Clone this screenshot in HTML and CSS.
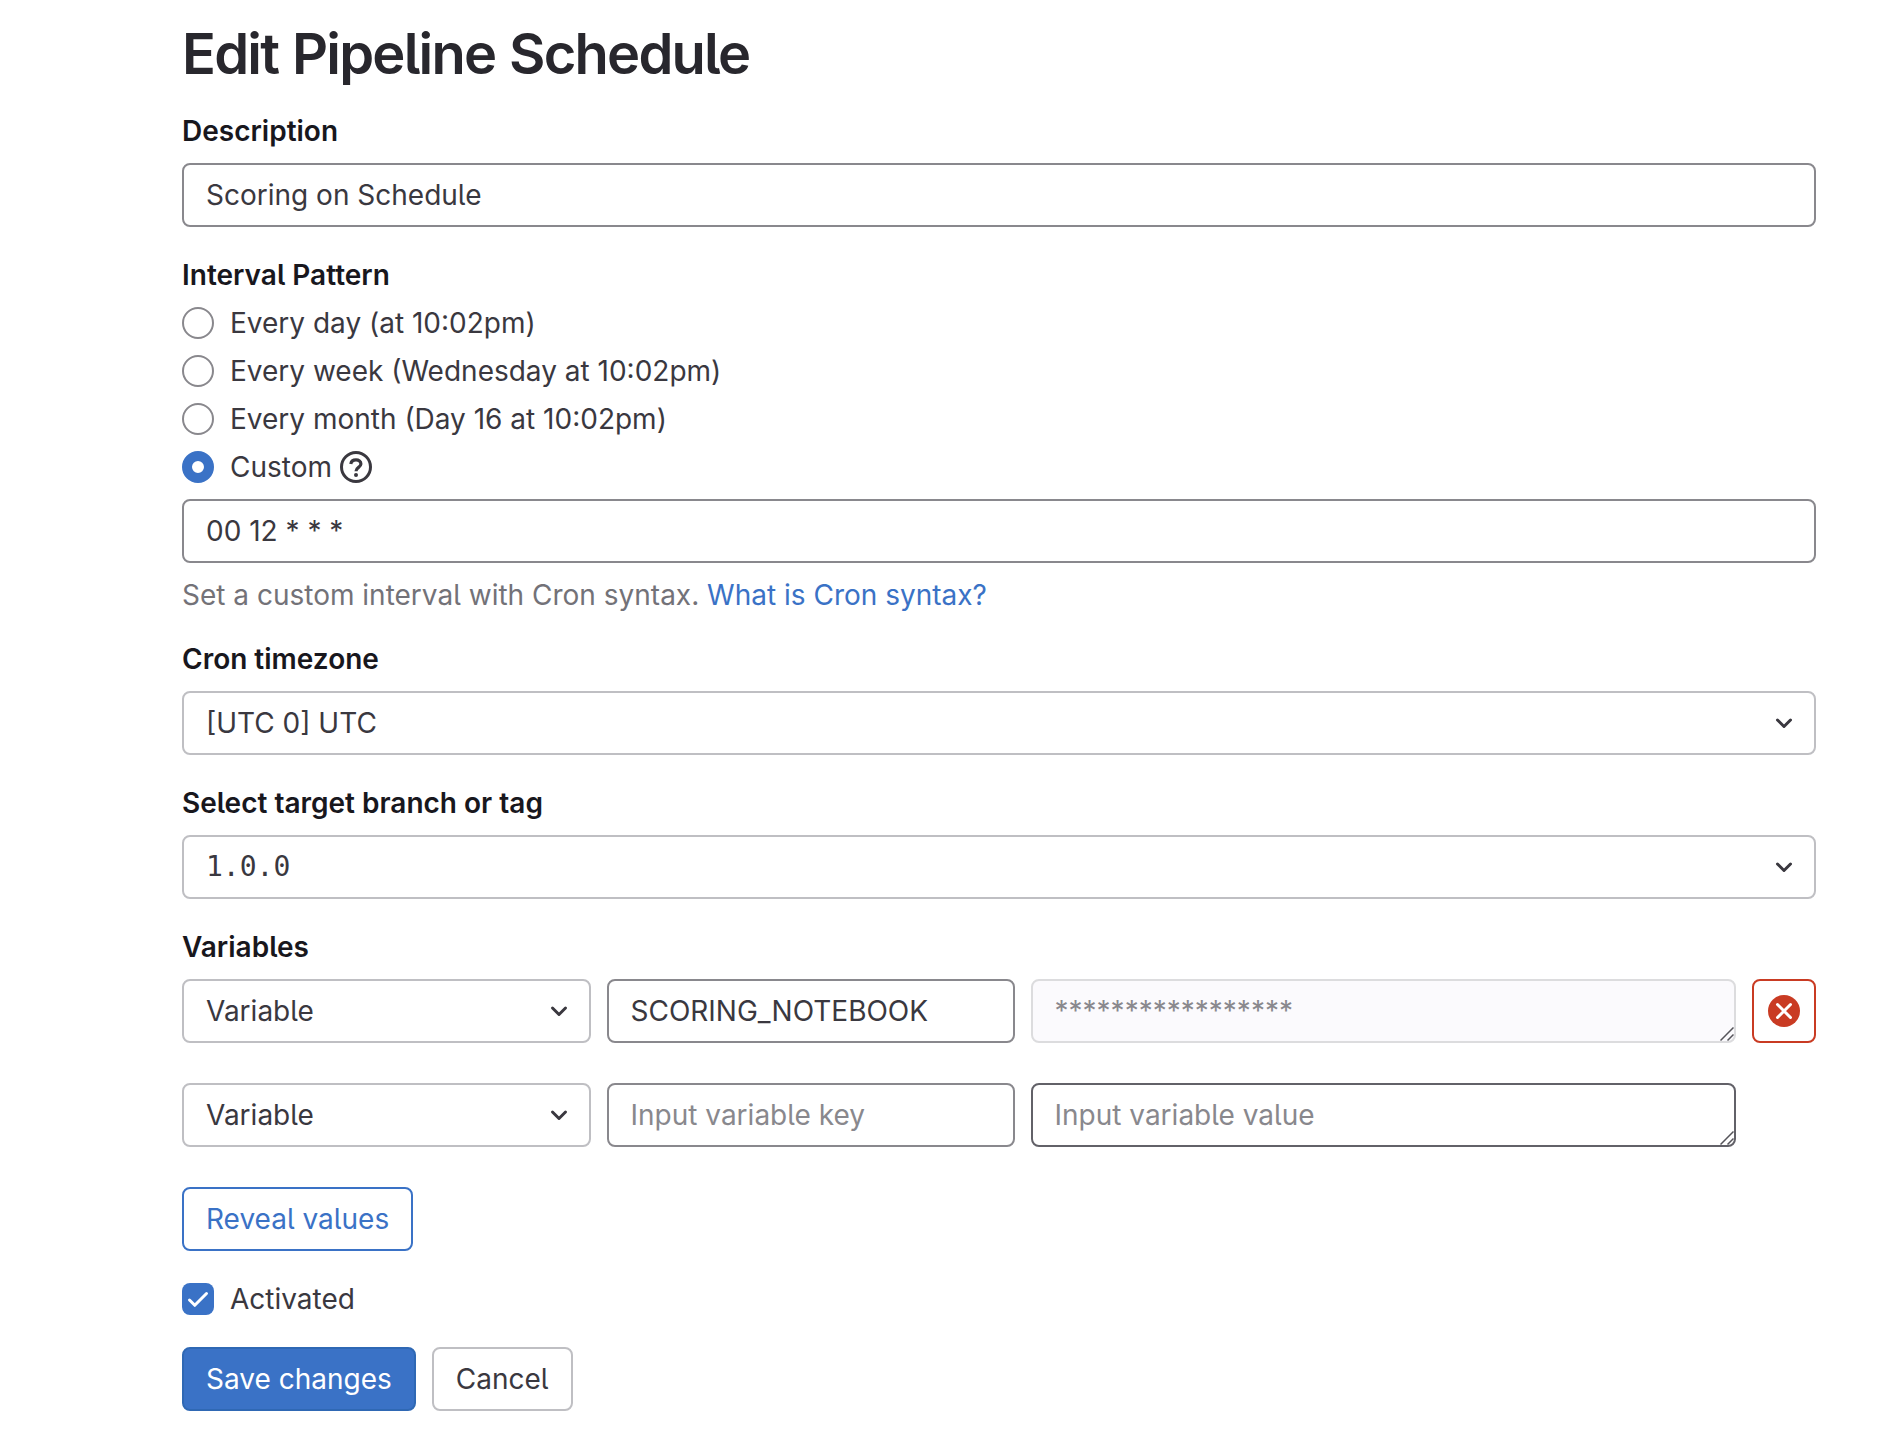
FILE: index.html
```html
<!DOCTYPE html>
<html lang="en">
<head>
<meta charset="utf-8">
<title>Edit Pipeline Schedule</title>
<link rel="stylesheet" href="styles.css">
</head>
<body>
<main class="page">
  <h1 class="title"><span>Edit Pipeline Schedule</span></h1>
  <form class="form">
    <section class="group">
      <div class="label"><span>Description</span></div>
      <div class="field"><span>Scoring on Schedule</span></div>
    </section>

    <section class="group group-hinted">
      <div class="label label-tight"><span>Interval Pattern</span></div>
      <div class="radios">
        <div class="choice"><i class="radio"></i><span>Every day (at 10:02pm)</span></div>
        <div class="choice"><i class="radio"></i><span>Every week (Wednesday at 10:02pm)</span></div>
        <div class="choice"><i class="radio"></i><span>Every month (Day 16 at 10:02pm)</span></div>
        <div class="choice"><i class="radio radio-on"></i><span>Custom</span>
          <svg class="help" viewBox="0 0 16 16"><circle cx="8" cy="8" r="7.25" fill="none" stroke="currentColor" stroke-width="1.5"/><path d="M5.4 6.5C5.6 5.2 6.7 4.45 8 4.45c1.4 0 2.45.8 2.45 2.05C10.45 8.2 8 8.2 8 10.1" fill="none" stroke="currentColor" stroke-width="1.6"/><circle cx="8" cy="12.05" r="1" fill="currentColor"/></svg>
        </div>
      </div>
      <div class="field"><span>00 12 * * *</span></div>
      <p class="hint"><span>Set a custom interval with Cron syntax. </span><a class="link">What is Cron syntax?</a></p>
    </section>

    <section class="group">
      <div class="label"><span>Cron timezone</span></div>
      <div class="field select"><span>[UTC 0] UTC</span><svg class="chevron" viewBox="0 0 16 16"><path d="M4.75 6.5 8 9.75l3.25-3.25"/></svg></div>
    </section>

    <section class="group">
      <div class="label"><span>Select target branch or tag</span></div>
      <div class="field select"><span class="mono">1.0.0</span><svg class="chevron" viewBox="0 0 16 16"><path d="M4.75 6.5 8 9.75l3.25-3.25"/></svg></div>
    </section>

    <section class="group">
      <div class="label"><span>Variables</span></div>
      <div class="variables">
        <div class="row">
          <div class="field select"><span>Variable</span><svg class="chevron" viewBox="0 0 16 16"><path d="M4.75 6.5 8 9.75l3.25-3.25"/></svg></div>
          <div class="field"><span>SCORING_NOTEBOOK</span></div>
          <div class="field area disabled"><span>*****************</span><svg class="grip" viewBox="0 0 14 14"><path d="M.5 13.5 13.5.5M7.5 13.5l6-6"/></svg></div>
          <div class="remove"><svg viewBox="0 0 16 16"><circle cx="8" cy="8" r="8" fill="#c93b23"/><path d="m4.75 4.75 6.5 6.5m0-6.5-6.5 6.5" stroke="#fff" stroke-width="1.5" stroke-linecap="round"/></svg></div>
        </div>
        <div class="row">
          <div class="field select"><span>Variable</span><svg class="chevron" viewBox="0 0 16 16"><path d="M4.75 6.5 8 9.75l3.25-3.25"/></svg></div>
          <div class="field empty"><span>Input variable key</span></div>
          <div class="field area empty active"><span>Input variable value</span><svg class="grip" viewBox="0 0 14 14"><path d="M.5 13.5 13.5.5M7.5 13.5l6-6"/></svg></div>
        </div>
      </div>
    </section>

    <div class="actions"><div class="button outline"><span>Reveal values</span></div></div>
    <div class="choice activated"><svg class="check" viewBox="0 0 32 32"><rect width="32" height="32" rx="8" fill="#3a72c6"/><path d="m7.5 17 5.3 5.3L24.5 10.5" fill="none" stroke="#fff" stroke-width="3" stroke-linecap="round" stroke-linejoin="round"/></svg><span>Activated</span></div>
    <div class="actions"><div class="button primary"><span>Save changes</span></div><div class="button"><span>Cancel</span></div></div>
  </form>
</main>
</body>
</html>
```
FILE: styles.css
```css
* { box-sizing: border-box; }

body {
  margin: 0;
  background: #fff;
  color: #3a383f;
  font: 400 28px/40px Inter, "Liberation Sans", sans-serif;
  font-feature-settings: "cv05";
}

.page {
  width: 1816px;
  padding: 18px 0 0 182px;
}

.title {
  margin: 0;
  height: 72px;
  color: #28272d;
  font-size: 56px;
  font-weight: 620;
  line-height: 72px;
  letter-spacing: -1.78px;
  word-spacing: 1.5px;
}

.form { padding-top: 21px; }

.group { margin-bottom: 28px; }

.group-hinted { margin-bottom: 24px; }

.label {
  height: 52px;
  color: #18171d;
  font-weight: 600;
}

.label-tight { height: 48px; }

.field {
  display: flex;
  align-items: center;
  height: 64px;
  padding: 0 22px;
  border: 2px solid #89888d;
  border-radius: 8px;
  background: #fff;
  white-space: pre;
}

.select {
  justify-content: space-between;
  padding-right: 14px;
  border-color: #bfbfc3;
}

.chevron {
  width: 32px;
  height: 32px;
  fill: none;
  stroke: #3a383f;
  stroke-width: 1.5;
  stroke-linecap: round;
  stroke-linejoin: round;
}

.mono { font-family: "DejaVu Sans Mono", monospace; }

.radios {
  display: grid;
  gap: 8px;
  margin-bottom: 12px;
}

.choice {
  display: flex;
  align-items: center;
  height: 40px;
}

.radio {
  width: 32px;
  height: 32px;
  margin-right: 16px;
  border: 2px solid #89888d;
  border-radius: 50%;
}

.radio-on { border: 10px solid #3a72c6; }

.help {
  width: 32px;
  height: 32px;
  margin-left: 8px;
}

.hint {
  height: 40px;
  margin: 12px 0 0;
  color: #737278;
}

.link { color: #3a72c6; }

.variables {
  display: grid;
  gap: 40px;
}

.row {
  display: grid;
  grid-template-columns: 408.5px 408px 705.5px 64px;
  gap: 16px;
}

.area { position: relative; }

.grip {
  position: absolute;
  right: 0;
  bottom: 0;
  width: 14px;
  height: 14px;
  fill: none;
  stroke: #55545a;
  stroke-width: 1.5;
}

.disabled {
  border-color: #dcdcde;
  background: #fbfafd;
  color: #89888d;
}

.empty { color: #89888d; }

.active { border-color: #626168; }

.remove {
  display: grid;
  place-items: center;
  height: 64px;
  border: 2px solid #c93b23;
  border-radius: 8px;
}

.remove svg {
  width: 32px;
  height: 32px;
}

.actions {
  display: flex;
  gap: 16px;
  padding-top: 12px;
}

.button {
  display: flex;
  align-items: center;
  height: 64px;
  padding: 0 22px;
  border: 2px solid #bfbfc3;
  border-radius: 8px;
}

.outline {
  border-color: #3a72c6;
  color: #3a72c6;
}

.primary {
  border-color: #2f68b4;
  background: #3a72c6;
  color: #fff;
}

.activated { margin: 28px 0 16px; }

.check {
  width: 32px;
  height: 32px;
  margin-right: 16px;
}
```
